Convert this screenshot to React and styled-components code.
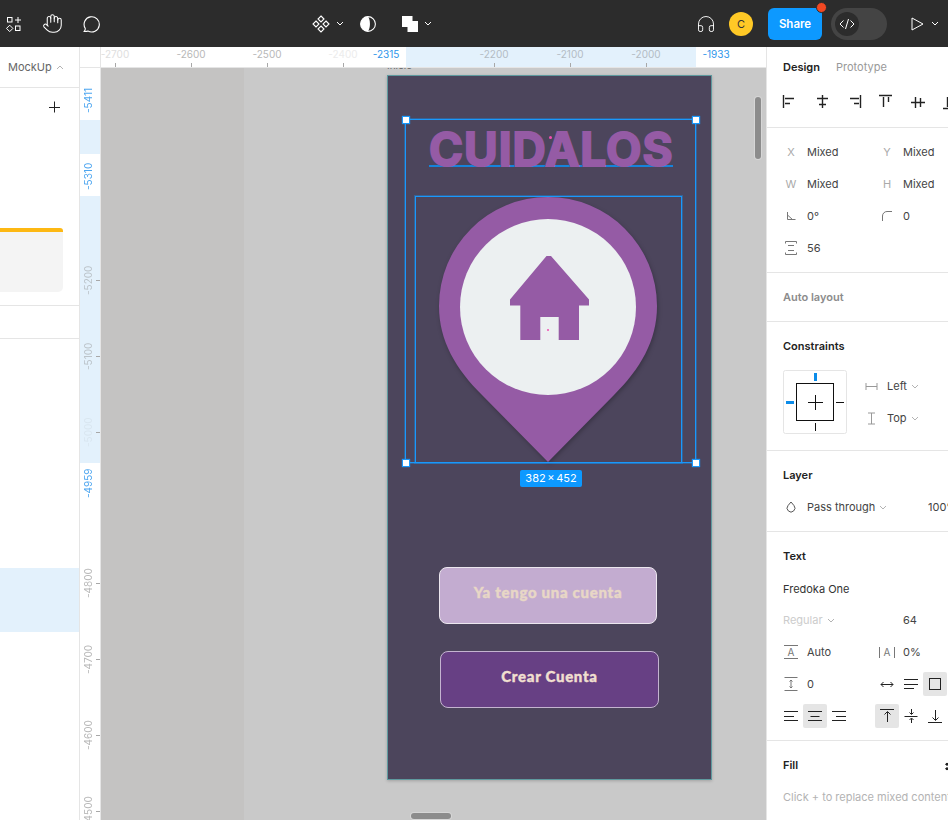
import React from 'react';
import styled, { createGlobalStyle } from 'styled-components';
import { Hand, Headphones } from 'lucide-react';

const GlobalStyle = createGlobalStyle`
  html, body { margin: 0; padding: 0; }
  body { font-family: Inter, "Liberation Sans", sans-serif; font-size: 11px; color: #333; background: #fff; }
  * { box-sizing: border-box; }
`;

const Chevron = ({ color = '#b3b3b3', up }) => (
  <ChevronSvg viewBox="0 0 8 5" $up={up}>
    <path d="M1 1l3 3 3-3" fill="none" stroke={color} />
  </ChevronSvg>
);

const AssetsIcon = () => (
  <svg width="16" height="16" viewBox="0 0 16 16" fill="none" stroke="#fff">
    <rect x="1.5" y="1.5" width="4.5" height="4.5" />
    <path d="M12 1v6M9 4h6" />
    <path d="M3.7 9.2l3.2 3.2-3.2 3.2-3.2-3.2z" />
    <rect x="9.5" y="10" width="4.5" height="4.5" />
  </svg>
);

const BubbleIcon = () => (
  <svg width="18" height="18" viewBox="0 0 18 18" fill="none" stroke="#fff" strokeWidth="1.1">
    <path d="M1.2 16.4c.9-1 1.2-2 1-3.1A7.6 7.6 0 1 1 5 16c-1.3.5-2.4.6-3.8.4z" />
  </svg>
);

const ComponentIcon = () => (
  <svg width="18" height="18" viewBox="0 0 18 18" fill="none" stroke="#fff" strokeWidth="1.1">
    <path d="M9 1l3 3-3 3-3-3zM4 6l3 3-3 3-3-3zM14 6l3 3-3 3-3-3zM9 11l3 3-3 3-3-3z" />
  </svg>
);

const ContrastIcon = () => (
  <svg width="16" height="16" viewBox="0 0 16 16">
    <circle cx="8" cy="8" r="7.4" fill="none" stroke="#fff" strokeWidth="1.1" />
    <path d="M8 .6a7.4 7.4 0 0 0 0 14.8C10.6 12 10.6 4 8 .6z" fill="#fff" />
  </svg>
);

const BooleanIcon = () => (
  <svg width="16" height="16" viewBox="0 0 16 16" fill="#fff">
    <path d="M0 0h10.5v5H16v11H5.5v-5H0z" />
  </svg>
);

const CodeIcon = () => (
  <svg width="16" height="12" viewBox="0 0 16 12" fill="none" stroke="#fff">
    <path d="M4.5 2.5L1 6l3.5 3.5M11.5 2.5L15 6l-3.5 3.5M9.5 1l-3 10" />
  </svg>
);

const PlayIcon = () => (
  <svg width="13" height="14" viewBox="0 0 13 14" fill="none" stroke="#fff">
    <path d="M1 1l11 6-11 6z" />
  </svg>
);

const PlusIcon = () => (
  <svg width="14" height="14" viewBox="0 0 14 14" stroke="#222">
    <path d="M7.5 1.5v11M2 7.5h11" />
  </svg>
);

const ALIGN_PATHS = [
  'M1.5 1v13M3 4.5h9M3 9.5h5',
  'M8.5 1v13M3 4.5h11M5 10.5h7',
  'M14.5 1v13M4 4.5h9M8 9.5h5',
  'M1 1.5h13M5.5 3v10M10.5 3v5',
  'M1 8.5h14M5.5 3v11M10.5 4v9',
  'M1 14.5h13M5.5 3v10M10.5 8v5',
];

const AlignIcon = ({ d }) => (
  <svg width="16" height="16" viewBox="0 0 16 16" fill="none" stroke="#222" strokeWidth="1.4">
    <path d={d} />
  </svg>
);

const Mini = ({ d, children, stroke = '#333', w = 16, h = 16 }) => (
  <svg width={w} height={h} viewBox={`0 0 ${w} ${h}`} fill="none" stroke={stroke}>
    {d && <path d={d} />}
    {children}
  </svg>
);

const PinGraphic = () => (
  <PinSvg viewBox="438 197 220 266" width="220" height="266">
    <path
      d="M548 462L482 395C456 369 439 341 439 306A109 109 0 1 1 657 306C657 341 640 369 614 395Z"
      fill="#955ba5"
    />
    <circle cx="548" cy="307" r="88" fill="#ecf0f1" />
    <path
      d="M546.5 256H551L589 299.5V305.5H579V340H558.7V317H540.3V340H520.3V305.5H510V299.5Z"
      fill="#955ba5"
    />
  </PinSvg>
);

const ConstraintGraphic = () => (
  <ConstraintSvg viewBox="0 0 64 64" width="64" height="64">
    <rect x="0.5" y="0.5" width="63" height="63" rx="2" fill="#fff" stroke="#e5e5e5" />
    <rect x="13.5" y="13.5" width="37" height="37" fill="none" stroke="#111" />
    <path d="M32.5 25v15M25 32.5h15M53 32.5h8M32.5 53v8" stroke="#111" />
    <path d="M32.5 3v8M3 32.5h8" stroke="#0c8ce9" strokeWidth="3" />
  </ConstraintSvg>
);

const TOP_TICKS = [
  { x: 14, label: '-2700', shade: '#dedede' },
  { x: 90, label: '-2600', shade: '#b8b8b8' },
  { x: 166, label: '-2500', shade: '#b8b8b8' },
  { x: 242, label: '-2400', shade: '#ececec' },
  { x: 285, label: '-2315', shade: '#2f95ea', blue: true },
  { x: 393, label: '-2200', shade: '#b3bcc4' },
  { x: 469, label: '-2100', shade: '#b3bcc4' },
  { x: 545, label: '-2000', shade: '#b3bcc4' },
  { x: 615, label: '-1933', shade: '#2f95ea', blue: true },
];

const SIDE_TICKS = [
  { y: 32, label: '-5411', shade: '#4ea6f0', blue: true },
  { y: 108, label: '-5310', shade: '#4ea6f0', blue: true },
  { y: 212, label: '-5200', shade: '#bcc4ca' },
  { y: 288, label: '-5100', shade: '#bcc4ca' },
  { y: 364, label: '-5000', shade: '#d9e6f0' },
  { y: 415, label: '-4959', shade: '#4ea6f0', blue: true },
  { y: 515, label: '-4800', shade: '#b8b8b8' },
  { y: 591, label: '-4700', shade: '#b8b8b8' },
  { y: 667, label: '-4600', shade: '#b8b8b8' },
  { y: 743, label: '-4500', shade: '#b8b8b8' },
];

const HANDLES = [
  { x: 'left', y: 'top' },
  { x: 'right', y: 'top' },
  { x: 'left', y: 'bottom' },
  { x: 'right', y: 'bottom' },
];

const App = () => {
  return (
    <Page>
      <GlobalStyle />
      <Toolbar>
        <ToolGroup $gap={20} $pad={6}>
          <AssetsIcon />
          <Hand size={21} color="#fff" strokeWidth={1.2} />
          <BubbleIcon />
        </ToolGroup>
        <ToolGroup $gap={6}>
          <ComponentIcon />
          <Chevron color="#fff" />
          <ToolSpacer $w={4} />
          <ContrastIcon />
          <ToolSpacer $w={14} />
          <BooleanIcon />
          <Chevron color="#fff" />
        </ToolGroup>
        <ToolGroup>
          <Headphones size={20} color="#fff" strokeWidth={1.1} />
          <Avatar>C</Avatar>
          <ShareButton>
            Share
            <RedDot />
          </ShareButton>
          <CodeToggle>
            <CodeKnob>
              <CodeIcon />
            </CodeKnob>
          </CodeToggle>
          <ToolSpacer $w={24} />
          <PlayIcon />
          <ToolSpacer $w={7} />
          <Chevron color="#fff" />
        </ToolGroup>
      </Toolbar>

      <Workspace>
        <LeftPanel>
          <PageRow>
            MockUp
            <Chevron up />
          </PageRow>
          <LayerBlock>
            <PlusRow>
              <PlusIcon />
            </PlusRow>
            <Card />
          </LayerBlock>
          <EmptyRow />
          <SelectedRow />
        </LeftPanel>

        <Stage>
          <RulerCorner />
          <TopRuler>
            <TopBand />
            {TOP_TICKS.map((t) => (
              <TopTick key={t.label} $x={t.x} $shade={t.shade}>
                {t.label}
                {!t.blue && <TopMark />}
              </TopTick>
            ))}
          </TopRuler>
          <SideRuler>
            <SideBand $top={52} $h={34} />
            <SideBand $top={128} $h={267} />
            {SIDE_TICKS.map((t) => (
              <SideTick key={t.label} $y={t.y} $shade={t.shade}>
                <SideLabel>{t.label}</SideLabel>
                {!t.blue && <SideMark />}
              </SideTick>
            ))}
          </SideRuler>

          <Canvas>
            <FrameName>Inicio</FrameName>
            <Frame>
              <Title $left={41}>CUIDALOS</Title>
              <PinWrap $left={50}>
                <PinGraphic />
              </PinWrap>
              <FrameButton $left={51} $top={104} $w={218} $fill="#c3acd0" $ink="#e8d7c6" $edge="#ece7ef">
                Ya tengo una cuenta
              </FrameButton>
              <FrameButton $left={52} $top={27} $w={219} $fill="#674084" $ink="#f0dfcf" $edge="#c4b4d0">
                Crear Cuenta
              </FrameButton>

              <SelectBox $left={17} $top={43} $w={291} $h={344}>
                {HANDLES.map((h) => (
                  <SelectHandle key={h.x + h.y} $x={h.x} $y={h.y} />
                ))}
              </SelectBox>
              <SelectBox $left={27} $top={120} $w={267} $h={267} />
              <SizeBadge>382 × 452</SizeBadge>
              <PinkDot $left={161} $top={60} $size={3} />
              <PinkDot $left={159} $top={253} $size={2} />
            </Frame>
            <ScrollV />
            <ScrollH />
          </Canvas>
        </Stage>

        <RightPanel>
          <Section $h={81}>
            <TabRow>
              <Tab $active>Design</Tab>
              <Tab>Prototype</Tab>
            </TabRow>
            <AlignRow>
              {ALIGN_PATHS.map((d) => (
                <AlignCell key={d}>
                  <AlignIcon d={d} />
                </AlignCell>
              ))}
            </AlignRow>
          </Section>

          <Section $h={145}>
            <Row>
              <Label>X</Label>
              <Value>Mixed</Value>
              <Label>Y</Label>
              <Value>Mixed</Value>
            </Row>
            <Row>
              <Label>W</Label>
              <Value>Mixed</Value>
              <Label>H</Label>
              <Value>Mixed</Value>
            </Row>
            <Row>
              <Label>
                <Mini w={10} h={10} stroke="#777" d="M1.5 1v7.5h8M1.5 4l5 4.5" />
              </Label>
              <Value>0°</Value>
              <Label>
                <Mini w={12} h={12} stroke="#777" d="M1.5 11V6a4.5 4.5 0 0 1 4.5-4.5h5" />
              </Label>
              <Value>0</Value>
            </Row>
            <Row>
              <Label>
                <Mini w={14} h={14} stroke="#777" d="M1.5 2.5V.5h11v2M4 4.5h6M4 9.5h6M1.5 11.5v2h11v-2" />
              </Label>
              <Value>56</Value>
            </Row>
          </Section>

          <Section $h={49}>
            <SectionTitle $muted>Auto layout</SectionTitle>
          </Section>

          <Section $h={129}>
            <SectionTitle>Constraints</SectionTitle>
            <ConstraintRow>
              <ConstraintGraphic />
              <ConstraintSelects>
                <SelectRow>
                  <Label>
                    <Mini w={13} h={9} stroke="#999" d="M1 1v7M12 1v7M1 4.5h11" />
                  </Label>
                  <Value>Left</Value>
                  <Chevron />
                </SelectRow>
                <SelectRow>
                  <Label>
                    <Mini w={9} h={13} stroke="#999" d="M1 1h7M1 12h7M4.5 1v11" />
                  </Label>
                  <Value>Top</Value>
                  <Chevron />
                </SelectRow>
              </ConstraintSelects>
            </ConstraintRow>
          </Section>

          <Section $h={81}>
            <SectionTitle>Layer</SectionTitle>
            <Row>
              <Label>
                <Mini w={10} h={12} stroke="#555" d="M5 1L2 4.6a3.9 3.9 0 1 0 6 0z" />
              </Label>
              <ValueWithChevron>
                Pass through <Chevron />
              </ValueWithChevron>
              <OpacityValue>100%</OpacityValue>
            </Row>
          </Section>

          <Section $h={209}>
            <SectionTitle>Text</SectionTitle>
            <Row>
              <FontName>Fredoka One</FontName>
            </Row>
            <Row>
              <FontWeight>
                Regular <Chevron />
              </FontWeight>
              <Value>64</Value>
            </Row>
            <Row>
              <Label>
                <LineHeightGlyph>A</LineHeightGlyph>
              </Label>
              <Value>Auto</Value>
              <Label>
                <LetterGlyph>A</LetterGlyph>
              </Label>
              <Value>0%</Value>
            </Row>
            <Row>
              <Label>
                <Mini w={14} h={14} stroke="#777" d="M0.5 .5h13M0.5 13.5h13M7 3v8M5.5 4.5L7 3l1.5 1.5M5.5 9.5L7 11l1.5-1.5" />
              </Label>
              <Value>0</Value>
              <IconButton>
                <Mini stroke="#222" d="M2 8.5h12M4.5 6L2 8.5 4.5 11M11.5 6L14 8.5 11.5 11" />
              </IconButton>
              <ButtonPair>
                <IconButton>
                  <Mini stroke="#222" d="M1 3.5h14M1 8.5h14M1 12.5h10" />
                </IconButton>
                <IconButton $active>
                  <Mini stroke="#222">
                    <rect x="2.5" y="2.5" width="11" height="11" />
                  </Mini>
                </IconButton>
              </ButtonPair>
            </Row>
            <ButtonRow>
              <IconButton>
                <Mini stroke="#222" d="M1 3.5h14M1 8.5h10M1 12.5h14" />
              </IconButton>
              <IconButton $active>
                <Mini stroke="#222" d="M1 3.5h14M3.5 8.5h9M1 12.5h14" />
              </IconButton>
              <IconButton>
                <Mini stroke="#222" d="M1 3.5h14M5 8.5h10M1 12.5h14" />
              </IconButton>
              <ToolSpacer $w={24} />
              <IconButton $active>
                <Mini stroke="#222" d="M1 1.5h14M8.5 14V4M5.5 6.5l3-3 3 3" />
              </IconButton>
              <IconButton>
                <Mini stroke="#222" d="M1.5 8.5h13M8.5 1v5M6.5 4.5l2 2 2-2M8.5 15v-4.5M6.5 12l2-2 2 2" />
              </IconButton>
              <IconButton>
                <Mini stroke="#222" d="M1 14.5h14M8.5 2v10M5.5 9.5l3 3 3-3" />
              </IconButton>
            </ButtonRow>
          </Section>

          <Section>
            <SectionTitle>Fill</SectionTitle>
            <FillDots />
            <FillHint>Click + to replace mixed content</FillHint>
          </Section>
        </RightPanel>
      </Workspace>
    </Page>
  );
};

const Page = styled.div`
  width: 948px;
  height: 820px;
  overflow: hidden;
  display: flex;
  flex-direction: column;
`;

const Toolbar = styled.header`
  height: 47px;
  flex: none;
  background: #2c2c2c;
  display: grid;
  grid-template-columns: 312px 384px 1fr;
  align-items: center;
`;

const ToolGroup = styled.div`
  display: flex;
  align-items: center;
  gap: ${(p) => p.$gap || 0}px;
  padding-left: ${(p) => p.$pad || 0}px;
`;

const ToolSpacer = styled.span`
  flex: none;
  width: ${(p) => p.$w}px;
`;

const ChevronSvg = styled.svg`
  width: 8px;
  height: 5px;
  flex: none;
  transform: ${(p) => (p.$up ? 'rotate(180deg)' : 'none')};
`;

const Avatar = styled.div`
  width: 24px;
  height: 24px;
  margin-left: 13px;
  border-radius: 50%;
  background: #ffc926;
  color: #333;
  font-size: 11px;
  display: flex;
  align-items: center;
  justify-content: center;
`;

const ShareButton = styled.div`
  position: relative;
  width: 54px;
  height: 32px;
  margin-left: 15px;
  border-radius: 6px;
  background: #0d99ff;
  color: #fff;
  font-size: 11.5px;
  font-weight: 600;
  display: flex;
  align-items: center;
  justify-content: center;
`;

const RedDot = styled.span`
  position: absolute;
  top: -6px;
  right: -5px;
  width: 11px;
  height: 11px;
  border-radius: 50%;
  background: #f24822;
  border: 1.5px solid #2c2c2c;
`;

const CodeToggle = styled.div`
  width: 56px;
  height: 32px;
  margin-left: 9px;
  padding: 4px;
  border-radius: 16px;
  background: #444;
`;

const CodeKnob = styled.div`
  width: 24px;
  height: 24px;
  border-radius: 50%;
  background: #2c2c2c;
  display: flex;
  align-items: center;
  justify-content: center;
`;

const Workspace = styled.div`
  flex: 1;
  min-height: 0;
  display: flex;
`;

const LeftPanel = styled.aside`
  width: 80px;
  flex: none;
  border-right: 1px solid #e5e5e5;
  background: #fff;
  overflow: hidden;
`;

const PageRow = styled.div`
  height: 41px;
  padding-left: 8px;
  border-bottom: 1px solid #e5e5e5;
  display: flex;
  align-items: center;
  gap: 4px;
  color: #666;
  white-space: nowrap;
`;

const LayerBlock = styled.div`
  height: 218px;
  border-bottom: 1px solid #e5e5e5;
`;

const PlusRow = styled.div`
  height: 38px;
  padding-left: 47px;
  display: flex;
  align-items: center;
`;

const Card = styled.div`
  width: 63px;
  height: 64px;
  margin-top: 102px;
  background: #f4f4f4;
  border-top: 4px solid #fdb813;
  border-radius: 0 3px 5px 0;
`;

const EmptyRow = styled.div`
  height: 33px;
  border-bottom: 1px solid #e5e5e5;
`;

const SelectedRow = styled.div`
  height: 64px;
  margin-top: 229px;
  background: #e3f1fc;
`;

const Stage = styled.main`
  flex: 1;
  min-width: 0;
  display: grid;
  grid-template-columns: 21px 1fr;
  grid-template-rows: 21px 1fr;
`;

const RulerCorner = styled.div`
  background: #fff;
  border-right: 1px solid #e5e5e5;
  border-bottom: 1px solid #e5e5e5;
`;

const TopRuler = styled.div`
  position: relative;
  overflow: hidden;
  background: #fff;
  border-bottom: 1px solid #e5e5e5;
`;

const TopBand = styled.div`
  position: absolute;
  left: 305px;
  top: 0;
  width: 290px;
  height: 100%;
  background: #e3f1fc;
`;

const TopTick = styled.div`
  position: absolute;
  left: ${(p) => p.$x - 30}px;
  top: 0;
  width: 60px;
  height: 100%;
  text-align: center;
  font-size: 10px;
  line-height: 14px;
  color: ${(p) => p.$shade};
`;

const TopMark = styled.span`
  position: absolute;
  left: 30px;
  bottom: 0;
  width: 1px;
  height: 4px;
  background: #a8a8a8;
`;

const SideRuler = styled.div`
  position: relative;
  overflow: hidden;
  background: #fff;
  border-right: 1px solid #e5e5e5;
`;

const SideBand = styled.div`
  position: absolute;
  left: 0;
  top: ${(p) => p.$top}px;
  width: 100%;
  height: ${(p) => p.$h}px;
  background: #e3f1fc;
`;

const SideTick = styled.div`
  position: absolute;
  left: 0;
  top: ${(p) => p.$y - 30}px;
  width: 100%;
  height: 60px;
  color: ${(p) => p.$shade};
`;

const SideLabel = styled.span`
  position: absolute;
  left: 1px;
  top: 0;
  height: 60px;
  line-height: 14px;
  font-size: 10px;
  writing-mode: vertical-rl;
  transform: rotate(180deg);
  text-align: center;
`;

const SideMark = styled.span`
  position: absolute;
  right: 0;
  top: 30px;
  width: 4px;
  height: 1px;
  background: #a8a8a8;
`;

const Canvas = styled.div`
  position: relative;
  overflow: hidden;
  background: linear-gradient(to right, #c4c3c2 0, #c4c3c2 143px, #c9c9c9 143px);
`;

const FrameName = styled.div`
  position: absolute;
  left: 286px;
  top: -9px;
  font-size: 10px;
  line-height: 12px;
  color: #666;
`;

const Frame = styled.section`
  position: absolute;
  left: 286px;
  top: 7px;
  width: 325px;
  height: 705px;
  display: flex;
  flex-direction: column;
  align-items: flex-start;
  background: #4c455c;
  border: 1px solid #5f9a9f;
  box-shadow: 0 1px 3px rgba(0, 0, 0, 0.2);
`;

const Title = styled.div`
  width: 244px;
  height: 42px;
  margin: 49px 0 0 ${(p) => p.$left}px;
  border-bottom: 2px solid #1583db;
  font-family: Inter, "Liberation Sans", sans-serif;
  font-weight: 700;
  font-size: 46px;
  line-height: 48px;
  letter-spacing: 1px;
  text-align: center;
  color: #955ba5;
  -webkit-text-stroke: 2px #955ba5;
  white-space: nowrap;
`;

const PinWrap = styled.div`
  margin: 30px 0 0 ${(p) => p.$left}px;
  height: 266px;
`;

const PinSvg = styled.svg`
  display: block;
  overflow: visible;
  filter: drop-shadow(1px 2px 2px rgba(0, 0, 0, 0.25));
`;

const FrameButton = styled.div`
  width: ${(p) => p.$w}px;
  height: 57px;
  margin: ${(p) => p.$top}px 0 0 ${(p) => p.$left}px;
  padding-bottom: 7px;
  border: 1px solid ${(p) => p.$edge};
  border-radius: 8px;
  background: ${(p) => p.$fill};
  color: ${(p) => p.$ink};
  font-family: Lato, "Open Sans", sans-serif;
  font-weight: 900;
  font-size: 15px;
  letter-spacing: 0.7px;
  -webkit-text-stroke: 0.4px ${(p) => p.$ink};
  display: flex;
  align-items: center;
  justify-content: center;
`;

const SelectBox = styled.div`
  position: absolute;
  left: ${(p) => p.$left}px;
  top: ${(p) => p.$top}px;
  width: ${(p) => p.$w}px;
  height: ${(p) => p.$h}px;
  border: 1px solid #1a98fb;
  box-shadow: 0 0 0 1px rgba(13, 153, 255, 0.35);
`;

const SelectHandle = styled.span`
  position: absolute;
  ${(p) => p.$x}: ${(p) => (p.$x === 'left' ? -4 : -5)}px;
  ${(p) => p.$y}: ${(p) => (p.$y === 'top' ? -4 : -5)}px;
  width: 8px;
  height: 8px;
  background: #fff;
  border: 1px solid #1a98fb;
  box-shadow: 0 0 1px #1a98fb;
`;

const SizeBadge = styled.div`
  position: absolute;
  left: 132px;
  top: 394px;
  width: 62px;
  height: 17px;
  border-radius: 2px;
  background: #0d99ff;
  color: #fff;
  font-size: 11px;
  line-height: 17px;
  word-spacing: -1.5px;
  text-align: center;
  white-space: nowrap;
`;

const PinkDot = styled.span`
  position: absolute;
  left: ${(p) => p.$left}px;
  top: ${(p) => p.$top}px;
  width: ${(p) => p.$size}px;
  height: ${(p) => p.$size}px;
  border-radius: 50%;
  background: #f24fb0;
`;

const ScrollV = styled.div`
  position: absolute;
  right: 5px;
  top: 29px;
  width: 6px;
  height: 62px;
  border-radius: 3px;
  background: #8c8c8c;
  box-shadow: 0 0 0 1px rgba(255, 255, 255, 0.25);
`;

const ScrollH = styled.div`
  position: absolute;
  left: 310px;
  bottom: 1px;
  width: 40px;
  height: 6px;
  border-radius: 3px;
  background: #8c8c8c;
  box-shadow: 0 0 0 1px rgba(255, 255, 255, 0.25);
`;

const RightPanel = styled.aside`
  width: 182px;
  flex: none;
  overflow: hidden;
  background: #fff;
  border-left: 1px solid #e5e5e5;
`;

const Section = styled.section`
  position: relative;
  height: ${(p) => (p.$h ? `${p.$h}px` : 'auto')};
  padding: 8px 0 0 12px;
  border-bottom: ${(p) => (p.$h ? '1px solid #e5e5e5' : 'none')};
`;

const TabRow = styled.div`
  height: 24px;
  padding-left: 4px;
  display: flex;
  align-items: center;
  gap: 16px;
`;

const Tab = styled.span`
  font-weight: ${(p) => (p.$active ? 600 : 400)};
  color: ${(p) => (p.$active ? '#222' : '#999')};
`;

const AlignRow = styled.div`
  display: grid;
  grid-template-columns: repeat(6, 32px);
  width: 192px;
  margin: 15px 0 0 -5px;
`;

const AlignCell = styled.div`
  height: 16px;
  display: flex;
  align-items: center;
  justify-content: center;
`;

const SectionTitle = styled.div`
  height: 32px;
  padding-left: 4px;
  line-height: 32px;
  font-weight: 600;
  color: ${(p) => (p.$muted ? '#8c8c8c' : '#222')};
`;

const Row = styled.div`
  height: 32px;
  display: grid;
  grid-template-columns: 24px 72px 24px 1fr;
  align-items: center;
  white-space: nowrap;
`;

const Label = styled.span`
  height: 24px;
  display: flex;
  align-items: center;
  justify-content: center;
  color: #aaa;
`;

const Value = styled.span`
  padding-left: 4px;
  color: #444;
  white-space: nowrap;
`;

const ValueWithChevron = styled(Value)`
  grid-column: 2 / 4;
  display: flex;
  align-items: center;
  gap: 4px;
`;

const OpacityValue = styled(Value)`
  grid-column: 4;
  margin-left: 25px;
`;

const ConstraintRow = styled.div`
  margin: 8px 0 0 4px;
  display: flex;
`;

const ConstraintSvg = styled.svg`
  display: block;
  flex: none;
`;

const ConstraintSelects = styled.div`
  margin-left: 12px;
`;

const SelectRow = styled.div`
  height: 32px;
  display: flex;
  align-items: center;
  & > svg:last-child {
    margin-left: 4px;
  }
  & > ${Label} {
    width: 24px;
  }
`;

const FontName = styled.span`
  grid-column: span 3;
  padding: 2px 0 0 4px;
  color: #333;
`;

const FontWeight = styled.span`
  grid-column: span 3;
  padding-left: 4px;
  color: #ccc;
  display: flex;
  align-items: center;
  gap: 4px;
`;

const LineHeightGlyph = styled.span`
  width: 14px;
  height: 14px;
  border-top: 1px solid #777;
  border-bottom: 1px solid #777;
  color: #777;
  font-size: 10px;
  line-height: 12px;
  text-align: center;
`;

const LetterGlyph = styled.span`
  width: 16px;
  height: 11px;
  border-left: 1px solid #777;
  border-right: 1px solid #777;
  color: #777;
  font-size: 10px;
  line-height: 11px;
  text-align: center;
`;

const IconButton = styled.span`
  width: 24px;
  height: 24px;
  flex: none;
  border-radius: 2px;
  background: ${(p) => (p.$active ? '#e5e5e5' : 'transparent')};
  display: flex;
  align-items: center;
  justify-content: center;
`;

const ButtonPair = styled.div`
  display: flex;
`;

const ButtonRow = styled.div`
  height: 32px;
  display: flex;
  align-items: center;
`;

const FillDots = styled.span`
  position: absolute;
  left: 178px;
  top: 21px;
  width: 8px;
  height: 9px;
  background-image: radial-gradient(circle, #222 1.5px, transparent 1.6px);
  background-size: 4px 4.5px;
`;

const FillHint = styled.div`
  height: 32px;
  padding-left: 4px;
  line-height: 32px;
  color: #b3b3b3;
  white-space: nowrap;
`;

export default App;
